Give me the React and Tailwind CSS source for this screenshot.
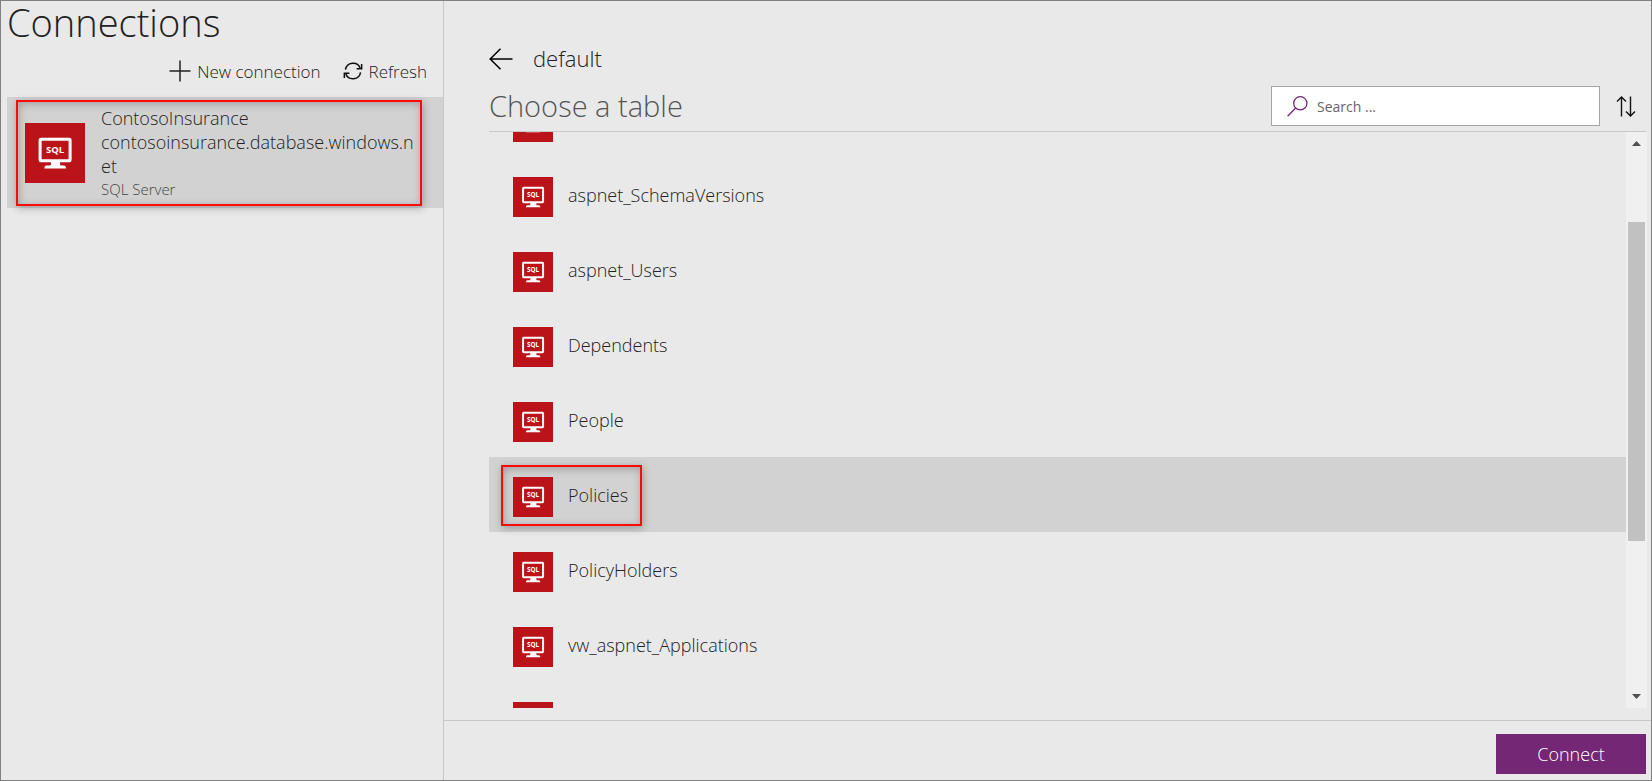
import { useLayoutEffect, useRef, useState } from "react";

const tables = [
  "aspnet_Roles",
  "aspnet_SchemaVersions",
  "aspnet_Users",
  "Dependents",
  "People",
  "Policies",
  "PolicyHolders",
  "vw_aspnet_Applications",
  "vw_aspnet_MembershipUsers",
];

const ROW_STEP = 50;

function SqlIcon({ className }) {
  return (
    <svg viewBox="0 0 60 60" className={className} aria-hidden="true">
      <rect width="60" height="60" fill="#ba141a" />
      <rect x="15.1" y="16.3" width="30" height="21.4" rx="0.8" fill="none" stroke="#fff" strokeWidth="3" />
      <path d="M26 38h9v3.200q0 1.300 1.700 1.300h2.200q1.900 0 2.100 2.900H19.300q.2-2.900 2.100-2.900h2.900q1.700 0 1.700-1.300z" fill="#fff" />
      <text x="30.100" y="30.400" textAnchor="middle" fontSize="9.500" fontWeight="700" fontFamily="'Open Sans', sans-serif" fill="#fff">SQL</text>
    </svg>
  );
}

function Callout({ className }) {
  return (
    <span
      aria-hidden="true"
      className={`pointer-events-none absolute border-2 border-[#fa0a0a] shadow-[1px_2px_8px_rgba(0,0,0,0.28),inset_1px_2px_8px_rgba(0,0,0,0.25)] ${className}`}
    />
  );
}

function Sidebar() {
  return (
    <aside className="flex w-[443px] shrink-0 flex-col border-r border-[#c8c8c8] pl-1.5">
      <h1 className="h-[44px] text-[38px] leading-[42px] font-light text-[#222]">Connections</h1>
      <div className="flex h-[52px] items-center justify-end gap-[22px] pr-4 text-[17px] font-light text-[#222]">
        <button type="button" className="flex items-center gap-1.5">
          <svg width="22" height="22" viewBox="0 0 22 22" fill="none" stroke="#222" strokeWidth="1.500" aria-hidden="true">
            <path d="M11 0.500v21M0.500 11h21" />
          </svg>
          <span className="pt-0.5">New connection</span>
        </button>
        <button type="button" className="flex items-center gap-1.5">
          <svg width="20" height="18" viewBox="0 0 22 20" fill="none" stroke="#111" strokeWidth="1.700" aria-hidden="true">
            <path d="M2.600 8.600A8.600 8.600 0 0 1 19 6.600M19.400 11.400A8.600 8.600 0 0 1 3 13.400" />
            <path d="M20.600 2.200v5.300h-5.600M1.400 17.800v-5.300h5.600" />
          </svg>
          <span className="pt-0.5">Refresh</span>
        </button>
      </div>
      <button type="button" className="relative flex items-center gap-4 bg-[#d2d2d2] pt-[9px] pb-2 pl-[18px] text-left">
        <SqlIcon className="size-[60px] shrink-0" />
        <span className="flex w-[322px] flex-col font-light">
          <span className="text-lg leading-6 break-all text-[#222]">ContosoInsurance</span>
          <span className="text-lg leading-6 break-all text-[#222]">contosoinsurance.database.windows.net</span>
          <span className="text-[15px] leading-[22px] text-[#444]">SQL Server</span>
        </span>
        <Callout className="top-[3px] right-[21px] bottom-[2px] left-[9px]" />
      </button>
    </aside>
  );
}

function TableList() {
  const [selected, setSelected] = useState("Policies");
  const scroller = useRef(null);

  useLayoutEffect(() => {
    scroller.current.scrollTop = ROW_STEP;
  }, []);

  return (
    <div className="mr-1 flex min-h-0 flex-1">
      <ul ref={scroller} className="min-w-0 flex-1 overflow-y-auto [scrollbar-width:none]">
        {tables.map((name) => (
          <li key={name} className={name === selected ? "bg-[#d2d2d2]" : ""}>
            <button type="button" onClick={() => setSelected(name)} className="flex h-[75px] w-full pl-6 text-left">
              <span className="relative flex gap-[15px] pt-5">
                <SqlIcon className="size-10" />
                <span className="text-lg leading-9 font-light text-[#222]">{name}</span>
                {name === selected && <Callout className="top-2 -right-3.5 bottom-1.5 -left-3" />}
              </span>
            </button>
          </li>
        ))}
      </ul>
      <div aria-hidden="true" className="flex w-[21px] flex-col items-center bg-[#f0f0f0] py-[9px]">
        <svg width="9" height="5" viewBox="0 0 9 5"><path d="M0 5h9L4.500 0z" fill="#505050" /></svg>
        <div className="flex min-h-0 w-full flex-1 flex-col px-0.5">
          <div className="h-[76px]" />
          <div className="h-[319px] bg-[#c1c1c1]" />
        </div>
        <svg width="9" height="5" viewBox="0 0 9 5"><path d="M0 0h9L4.500 5z" fill="#505050" /></svg>
      </div>
    </div>
  );
}

export default function App() {
  return (
    <div className="flex h-screen border border-[#808080] bg-[#e9e9e9] font-['Open_Sans',sans-serif]">
      <Sidebar />
      <main className="flex min-w-0 flex-1 flex-col">
        <div className="flex min-h-0 flex-1 flex-col pt-[38px] pb-3 pl-[45px]">
          <div className="flex h-10 items-center gap-5">
            <button type="button" aria-label="Back">
              <svg width="24" height="22" viewBox="0 0 24 22" fill="none" stroke="#000" strokeWidth="1.500" aria-hidden="true">
                <path d="M1 11h22.500M11.500 0.800L1.200 11l10.300 10.200" />
              </svg>
            </button>
            <h2 className="pb-0.5 text-[22px] leading-8 font-light text-[#222]">default</h2>
          </div>
          <div className="mr-[5px] flex h-[53px] items-center justify-between border-b border-[#c8c8c8] pt-0.5">
            <h3 className="text-[29px] leading-9 font-light text-[#555]">Choose a table</h3>
            <div className="flex items-center gap-4 pr-2.5">
              <label className="flex h-10 w-[329px] items-center gap-[9px] border border-[#a6a6a6] bg-white pl-[15px]">
                <svg width="21" height="21" viewBox="0 0 21 21" fill="none" stroke="#742774" strokeWidth="1.300" aria-hidden="true">
                  <circle cx="13.300" cy="7.300" r="6.600" />
                  <path d="M8.600 12L0.600 20.200" />
                </svg>
                <input type="text" aria-label="Search" placeholder="Search ..." className="min-w-0 flex-1 pt-0.5 text-sm outline-none placeholder:text-[#666]" />
              </label>
              <button type="button" aria-label="Sort">
                <svg width="20" height="21" viewBox="0 0 20 21" fill="none" stroke="#111" strokeWidth="1.400" aria-hidden="true">
                  <path d="M5.500 20.500V1M1 5.500L5.500 1L10 5.500M14.500 0.500V20M10 15.500L14.500 20L19 15.500" />
                </svg>
              </button>
            </div>
          </div>
          <TableList />
        </div>
        <footer className="flex h-[60px] items-center justify-end border-t border-[#c8c8c8] pt-1.5 pr-[5px]">
          <button type="button" className="h-10 w-[150px] bg-[#742774] text-lg font-light text-white">Connect</button>
        </footer>
      </main>
    </div>
  );
}
